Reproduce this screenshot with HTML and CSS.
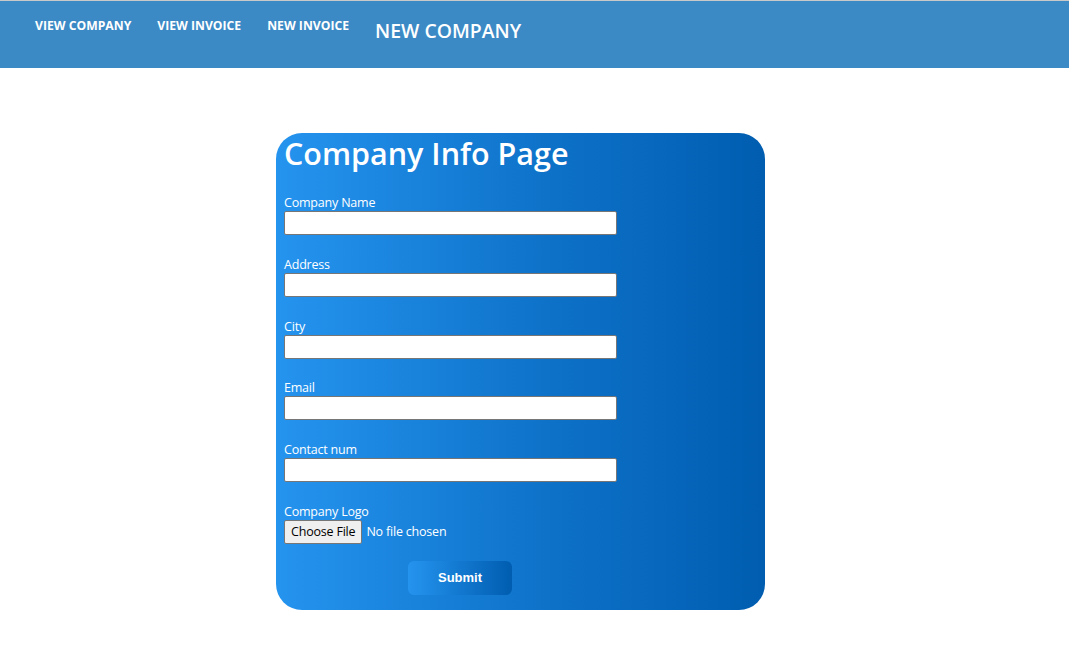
FILE: index.html
```html
<!DOCTYPE html>
<html>
<head>
<meta charset="utf-8">
<link rel="stylesheet" href="styles.css">
</head>
<body>
<header class="topbar">
  <nav class="nav">
    <a class="nav-link" href="#">VIEW COMPANY</a>
    <a class="nav-link" href="#">VIEW INVOICE</a>
    <a class="nav-link" href="#">NEW INVOICE</a>
    <a class="nav-link nav-active" href="#">NEW COMPANY</a>
  </nav>
</header>
<main class="main">
  <form class="card">
    <h1 class="title">Company Info Page</h1>
    <div class="field">
      <label class="label">Company Name</label>
      <input class="input" type="text">
    </div>
    <div class="field">
      <label class="label">Address</label>
      <input class="input" type="text">
    </div>
    <div class="field">
      <label class="label">City</label>
      <input class="input" type="text">
    </div>
    <div class="field">
      <label class="label">Email</label>
      <input class="input" type="text">
    </div>
    <div class="field">
      <label class="label">Contact num</label>
      <input class="input" type="text">
    </div>
    <div class="field">
      <label class="label">Company Logo</label>
      <div class="file-row">
        <span class="file-btn">Choose File</span>
        <span class="file-text">No file chosen</span>
      </div>
    </div>
    <div class="actions">
      <button class="submit" type="button">Submit</button>
    </div>
  </form>
</main>
</body>
</html>
```
FILE: styles.css
```css
html, body {
  margin: 0;
  padding: 0;
  background: #ffffff;
}
body {
  font-family: "Open Sans", "Noto Sans", sans-serif;
  border-top: 1px solid #c9c9c9;
}
.topbar {
  height: 67px;
  background: #3b8ac6;
}
.nav {
  display: flex;
  align-items: flex-start;
  padding-left: 35px;
  gap: 26px;
}
.nav-link {
  color: #ffffff;
  text-decoration: none;
  font-weight: 700;
  font-size: 12.2px;
  margin-top: 16px;
}
.nav-active {
  font-size: 19.4px;
  margin-top: 16px;
  font-weight: 600;
}
.main {
  padding: 65px 0 0 276px;
}
.card {
  width: 489px;
  height: 477px;
  box-sizing: border-box;
  border-radius: 26px;
  background: linear-gradient(90deg, #2594ef 0%, #0e72c9 55%, #005db0 100%);
  padding: 0 8px;
  color: #ffffff;
  display: flex;
  flex-direction: column;
}
.title {
  margin: 0 0 22px;
  font-size: 30.5px;
  font-weight: 600;
  line-height: 40px;
}
.field {
  display: flex;
  flex-direction: column;
  margin-bottom: 21.8px;
}
.label {
  font-size: 12.5px;
  line-height: 16px;
  letter-spacing: -0.2px;
}
.input {
  width: 333px;
  height: 24px;
  box-sizing: border-box;
  border: 1px solid #767676;
  border-radius: 2px;
  background: #ffffff;
  margin: 0;
}
.file-row {
  display: flex;
  align-items: center;
  gap: 4px;
  height: 24px;
}
.file-btn {
  box-sizing: border-box;
  height: 24px;
  padding: 0 6px;
  display: flex;
  align-items: center;
  background: #efefef;
  border: 1px solid #767676;
  border-radius: 2px;
  color: #000000;
  font-size: 12.5px;
  letter-spacing: -0.2px;
}
.file-text {
  font-size: 12.5px;
  letter-spacing: -0.2px;
}
.actions {
  padding-left: 124px;
  margin-top: -4.8px;
}
.submit {
  width: 104px;
  height: 34px;
  border: none;
  border-radius: 6px;
  background: linear-gradient(90deg, #2594ef 0%, #005db0 100%);
  color: #ffffff;
  font-family: "Liberation Sans", Arial, sans-serif;
  font-weight: 700;
  font-size: 13px;
}
```
